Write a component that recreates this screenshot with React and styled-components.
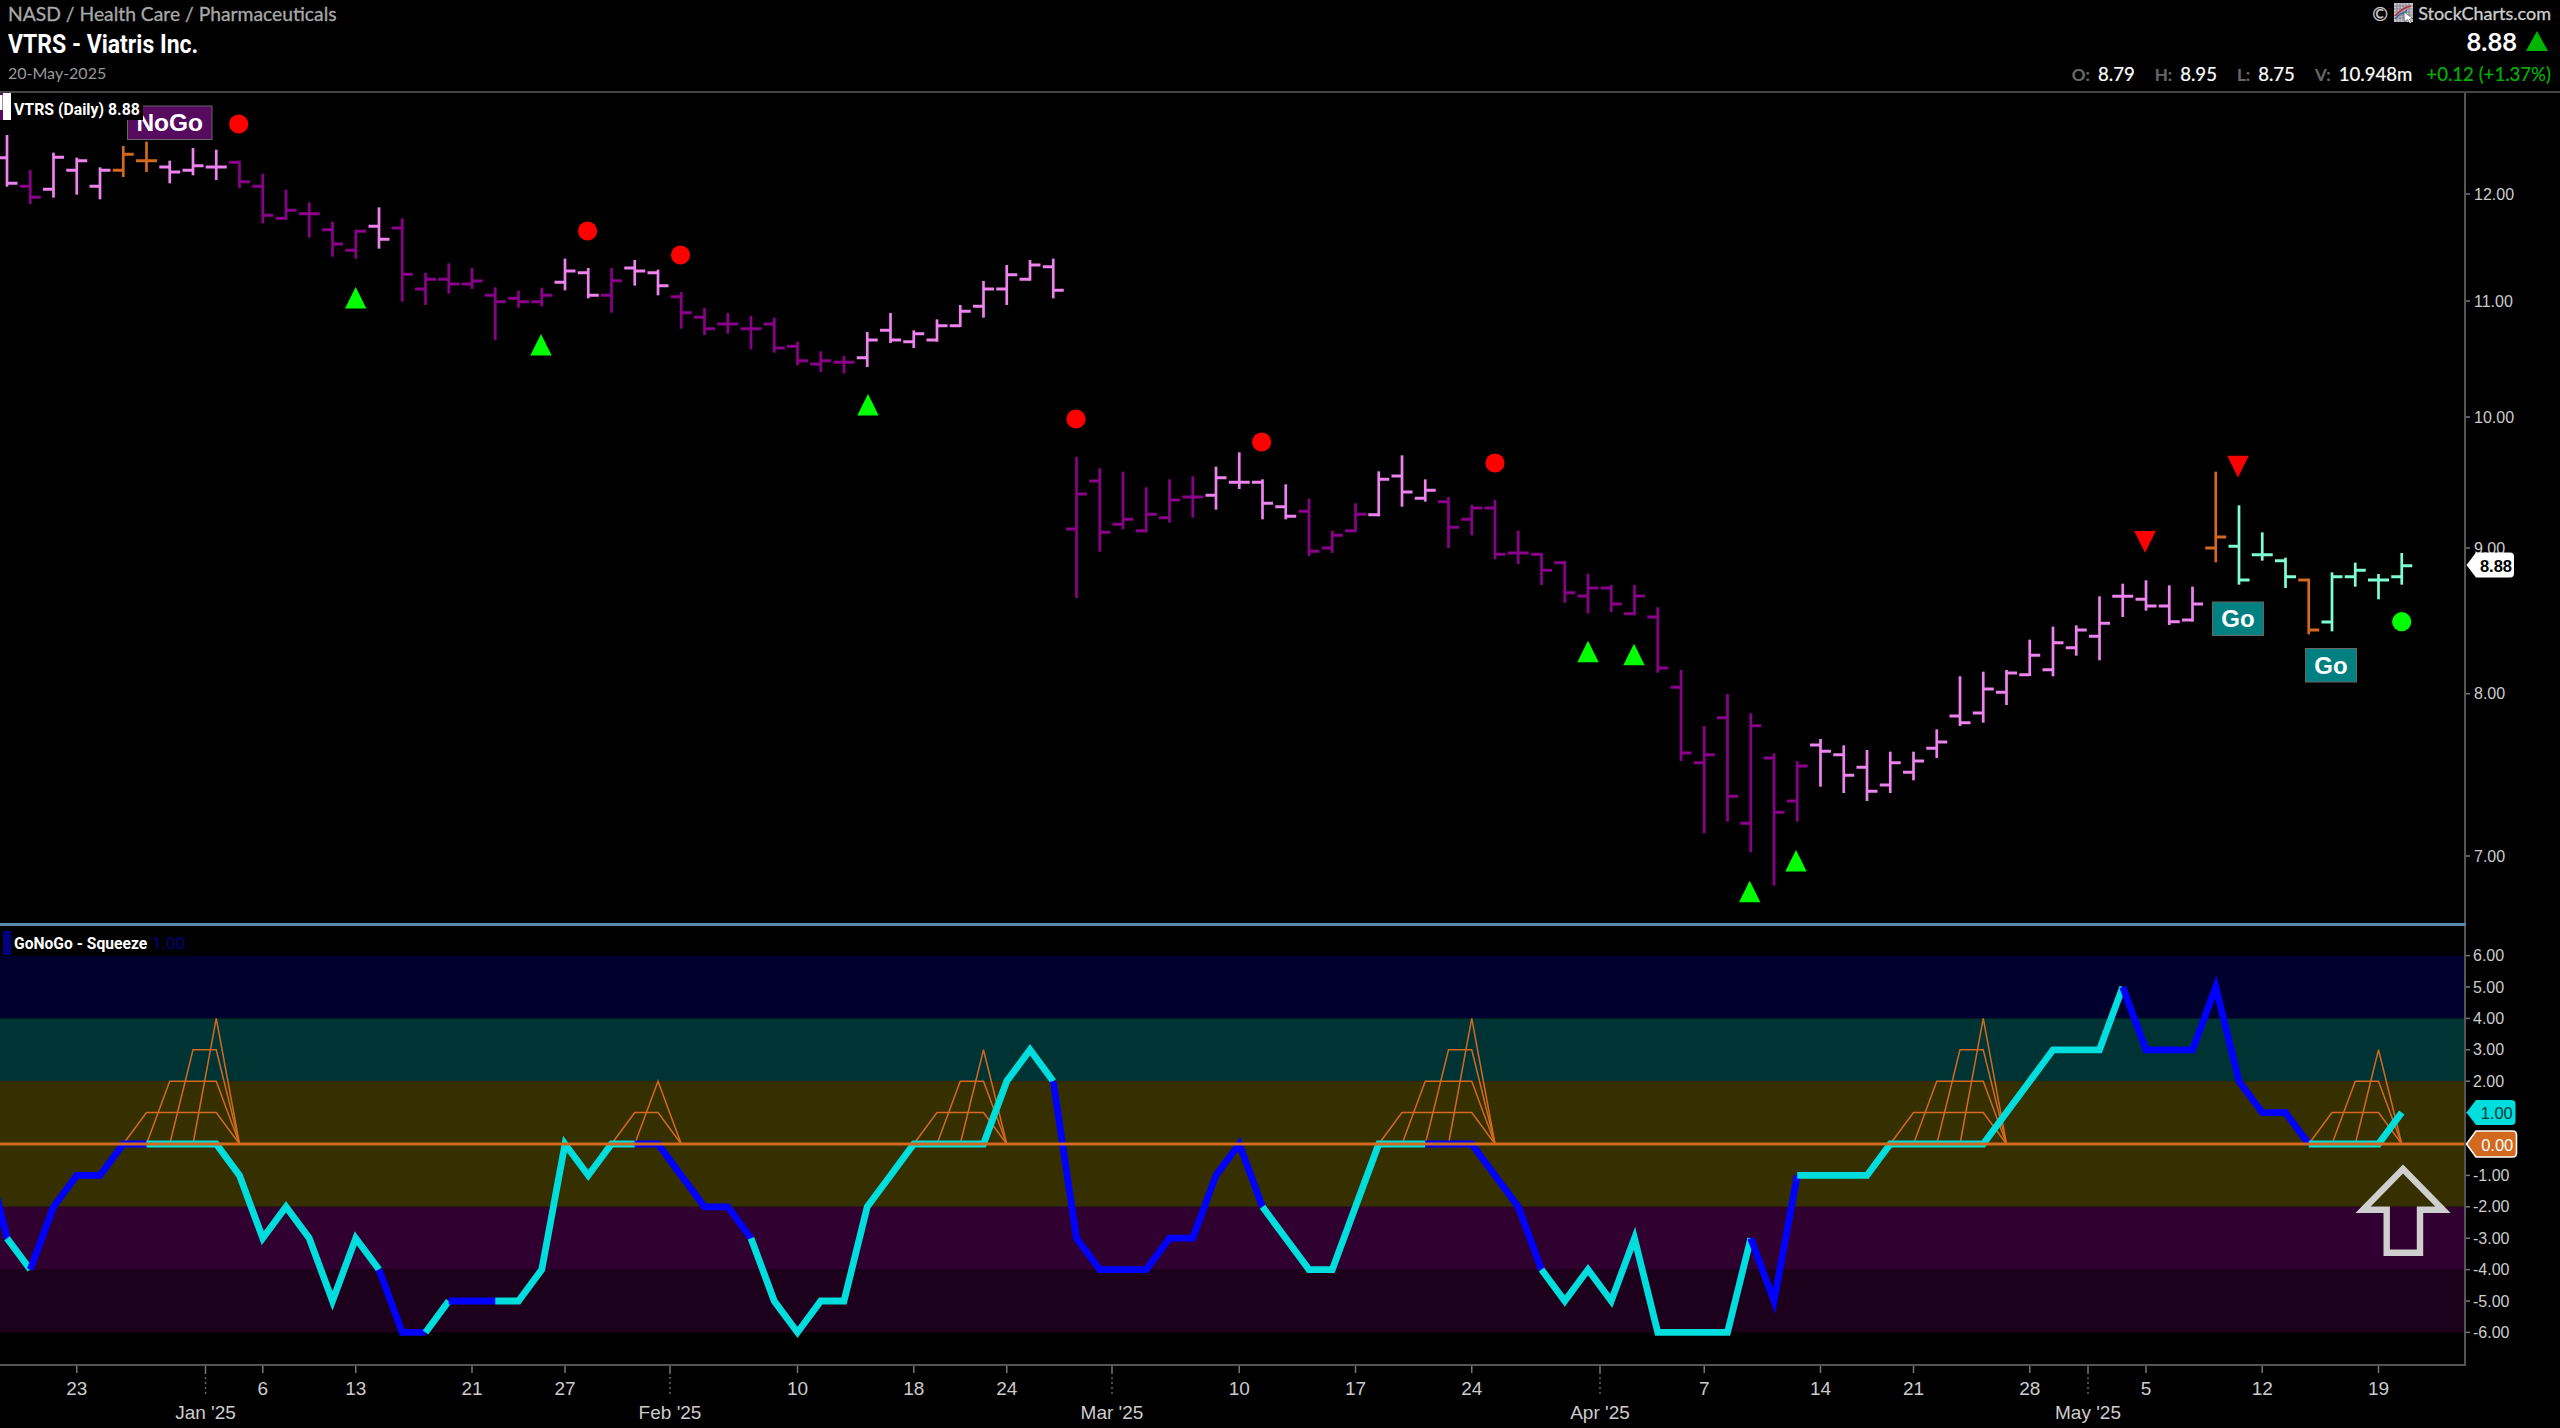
import React from "react";
import styled, { createGlobalStyle } from "styled-components";

const PINK = "#ee82ee";
const PURPLE = "#8b008b";
const ORANGE = "#d2691e";
const MINT = "#7fffd4";
const CYAN = "#00dddd";
const BLUE = "#0000ff";
const RED = "#ff0000";
const GREEN = "#00ff00";

const barX = (i) => 7 + 23.25 * i;
const oscY = (v) => 1144 - 31.4 * v;

const colors = { p: PINK, m: PURPLE, o: ORANGE, t: MINT };

// rows are [colour, high, low, open, close], read off the chart at 3x from a given top
const rows = (top, list) =>
  list.map(([c, hi, lo, open, close]) => ({
    color: colors[c],
    hi: top + hi / 3,
    lo: top + lo / 3,
    open: top + open / 3,
    close: top + close / 3
  }));

const bars = [
  ...rows(90, [
    ["p", 135, 290, 203, 280],
    ["m", 240, 342, 289, 322],
    ["p", 188, 323, 298, 202],
    ["p", 203, 314, 241, 212],
    ["p", 232, 328, 289, 241],
    ["o", 168, 261, 241, 193],
    ["o", 155, 246, 212, 212],
    ["p", 212, 280, 231, 246],
    ["p", 174, 256, 241, 227],
    ["p", 179, 270, 231, 231],
    ["m", 212, 294, 217, 275],
    ["m", 251, 400, 289, 376],
    ["m", 299, 390, 385, 361],
    ["m", 337, 443, 371, 371],
    ["m", 395, 500, 419, 462],
    ["m", 419, 506, 481, 424],
    ["p", 352, 476, 409, 448],
    ["m", 385, 635, 414, 553],
    ["m", 549, 645, 597, 568],
    ["m", 520, 611, 568, 582],
    ["m", 534, 597, 582, 573],
    ["m", 592, 750, 616, 635]
  ]),
  ...rows(200, [
    ["m", 272, 323, 295, 305],
    ["m", 263, 319, 305, 286],
    ["p", 176, 271, 247, 213],
    ["p", 204, 295, 218, 286],
    ["m", 204, 338, 286, 242],
    ["p", 180, 257, 204, 213],
    ["p", 209, 286, 218, 257],
    ["m", 276, 386, 290, 338],
    ["m", 324, 405, 352, 386],
    ["m", 339, 401, 372, 372],
    ["m", 348, 448, 386, 386],
    ["m", 353, 458, 372, 444],
    ["m", 425, 496, 439, 482],
    ["m", 454, 516, 492, 482],
    ["m", 468, 521, 487, 487],
    ["p", 396, 501, 473, 420],
    ["p", 339, 429, 391, 420],
    ["p", 391, 444, 425, 401],
    ["p", 358, 425, 420, 377],
    ["p", 315, 381, 377, 334],
    ["p", 243, 353, 319, 267],
    ["p", 195, 315, 267, 224],
    ["p", 180, 242, 238, 195],
    ["p", 176, 295, 200, 271]
  ]),
  ...rows(400, [
    ["m", 171, 594, 387, 282],
    ["m", 205, 455, 243, 397],
    ["m", 215, 388, 373, 358],
    ["m", 262, 397, 392, 343],
    ["m", 238, 368, 353, 300],
    ["m", 229, 353, 291, 291],
    ["p", 200, 329, 286, 233],
    ["p", 157, 267, 247, 247],
    ["p", 238, 358, 247, 310],
    ["p", 253, 358, 320, 349],
    ["m", 296, 468, 334, 454],
    ["m", 392, 459, 444, 406],
    ["m", 310, 397, 392, 343],
    ["p", 214, 349, 344, 238],
    ["p", 166, 320, 228, 276],
    ["p", 238, 305, 295, 271],
    ["m", 291, 444, 305, 382],
    ["m", 315, 406, 358, 324],
    ["m", 300, 478, 324, 463],
    ["m", 392, 492, 459, 459],
    ["m", 459, 555, 463, 511],
    ["m", 483, 608, 488, 578],
    ["m", 521, 641, 588, 564],
    ["m", 555, 636, 564, 612],
    ["m", 555, 646, 641, 588],
    ["m", 622, 818, 651, 804],
    ["m", 810, 1083, 862, 1059]
  ]),
  ...rows(560, [
    ["m", 498, 820, 608, 584],
    ["m", 402, 785, 473, 709],
    ["m", 460, 877, 790, 497],
    ["m", 580, 977, 594, 757],
    ["m", 604, 785, 723, 618],
    ["p", 537, 680, 555, 574],
    ["p", 556, 699, 584, 646],
    ["p", 570, 723, 622, 694],
    ["p", 575, 699, 675, 608],
    ["p", 575, 661, 637, 603],
    ["p", 508, 594, 565, 546],
    ["p", 349, 498, 468, 488],
    ["p", 335, 488, 459, 387],
    ["p", 330, 435, 397, 339],
    ["p", 239, 348, 344, 286],
    ["p", 200, 349, 329, 248],
    ["p", 196, 287, 263, 210],
    ["p", 109, 301, 229, 190],
    ["p", 71, 171, 109, 109],
    ["p", 61, 152, 118, 138],
    ["p", 76, 195, 138, 185],
    ["p", 80, 185, 180, 132]
  ]),
  ...rows(440, [
    ["o", 95, 367, 324, 291],
    ["t", 196, 434, 319, 420],
    ["t", 277, 362, 344, 344],
    ["t", 353, 444, 362, 410],
    ["o", 416, 583, 420, 570],
    ["t", 397, 574, 546, 410],
    ["t", 368, 440, 410, 391],
    ["t", 402, 478, 420, 420],
    ["t", 339, 434, 410, 377]
  ])
];

const redDots = [
  [238.7, 124],
  [587.6, 231],
  [680.5, 255],
  [1076, 419],
  [1261.6, 442],
  [1495, 463]
];
const upMarks = [
  [355.7, 287],
  [541, 334],
  [868, 394],
  [1588, 640.7],
  [1634, 643.7],
  [1749.7, 880.7],
  [1796, 850]
];
const downMarks = [
  [2145, 531],
  [2238, 455.7]
];

const priceTicks = [
  ["12.00", 194],
  ["11.00", 301],
  ["10.00", 417],
  ["9.00", 548],
  ["8.00", 693.7],
  ["7.00", 856]
];

const oscTicks = [6, 5, 4, 3, 2, 1, 0, -1, -2, -3, -4, -5, -6];

const bands = [
  { from: 6, to: 4, fill: "#00002e" },
  { from: 4, to: 2, fill: "#003333" },
  { from: 2, to: -2, fill: "#363000" },
  { from: -2, to: -4, fill: "#300030" },
  { from: -4, to: -6, fill: "#1c001c" }
];

// oscillator value per bar, first entry sits one bar left of the chart
const osc = [
  0, -3, -4, -2, -1, -1, 0, 0, 0, 0, 0, -1, -3, -2, -3, -5, -3, -4, -6, -6, -5, -5, -5, -5, -4, 0, -1,
  0, 0, 0, -1, -2, -2, -3, -5, -6, -5, -5, -2, -1, 0, 0, 0, 0, 2, 3, 2, -3, -4, -4, -4, -3, -3, -1, 0,
  -2, -3, -4, -4, -2, 0, 0, 0, 0, 0, -1, -2, -4, -5, -4, -5, -3, -6, -6, -6, -6, -3, -5, -1, -1, -1, -1,
  0, 0, 0, 0, 0, 1, 2, 3, 3, 3, 5, 3, 3, 3, 5, 2, 1, 1, 0, 0, 0, 0, 1
];

// bar ranges where the oscillator is drawn blue, the rest is cyan
const blueRuns = [
  [0, 0],
  [2, 6],
  [17, 18],
  [20, 21],
  [28, 32],
  [46, 54],
  [62, 66],
  [76, 77],
  [92, 99]
];

const isBlue = (i) => blueRuns.some(([a, b]) => i >= a && i <= b);

const oscRuns = () => {
  const runs = [];
  for (let i = 0; i <= 103; i++) {
    const color = isBlue(i) ? BLUE : CYAN;
    const from = `${barX(i - 1)},${oscY(osc[i])}`;
    const to = `${barX(i)},${oscY(osc[i + 1])}`;
    const last = runs[runs.length - 1];
    if (last && last.color === color) last.points.push(to);
    else runs.push({ color, points: [from, to] });
  }
  return runs;
};

const squeezes = [
  [5, 9],
  [26, 28],
  [39, 42],
  [59, 63],
  [81, 85],
  [99, 102]
];

const squeezeLines = () => {
  const lines = [];
  squeezes.forEach(([start, peak]) => {
    for (let k = 1; k <= peak - start; k++) {
      lines.push(
        [
          [start + k - 1, 0],
          [start + k, k],
          [peak, k],
          [peak + 1, 0]
        ]
          .map(([i, v]) => `${barX(i)},${oscY(v)}`)
          .join(" ")
      );
    }
  });
  return lines;
};

const dayLabels = [
  ["23", 3],
  ["6", 11],
  ["13", 15],
  ["21", 20],
  ["27", 24],
  ["10", 34],
  ["18", 39],
  ["24", 43],
  ["10", 53],
  ["17", 58],
  ["24", 63],
  ["7", 73],
  ["14", 78],
  ["21", 82],
  ["28", 87],
  ["5", 92],
  ["12", 97],
  ["19", 102]
];

const monthLabels = [
  ["Jan '25", 205.5],
  ["Feb '25", 670],
  ["Mar '25", 1112],
  ["Apr '25", 1600],
  ["May '25", 2088]
];

const GlobalStyle = createGlobalStyle`
  html, body {
    margin: 0;
    background: #000;
  }
`;

const Page = styled.div`
  width: 2560px;
  height: 1428px;
  display: flex;
  flex-direction: column;
  background: #000;
  overflow: hidden;
  font-family: Lato, "Liberation Sans", sans-serif;
`;

const Header = styled.header`
  height: 93px;
  box-sizing: border-box;
  border-bottom: 2px solid #444;
  display: flex;
  justify-content: space-between;
  padding: 0 9px 0 8px;
`;

const Titles = styled.div`
  display: flex;
  flex-direction: column;
`;

const Sector = styled.div`
  height: 28px;
  line-height: 28px;
  font-size: 19.3px;
  color: #a8a8a8;
  -webkit-text-stroke: 0.3px #a8a8a8;
`;

const Name = styled.div`
  height: 34px;
  line-height: 34px;
  font-family: Roboto, sans-serif;
  font-weight: 700;
  font-size: 25px;
  color: #fff;
  transform: scaleX(0.92);
  transform-origin: left center;
  white-space: nowrap;
`;

const DateLine = styled.div`
  height: 26px;
  line-height: 22px;
  font-size: 16px;
  color: #999;
`;

const Quote = styled.div`
  display: flex;
  flex-direction: column;
  align-items: flex-end;
`;

const Credit = styled.div`
  height: 27px;
  display: flex;
  align-items: center;
  font-size: 18px;
  color: #ccc;
  gap: 4px;
  -webkit-text-stroke: 0.3px #ccc;
`;

const Copy = styled.span`
  font-size: 19px;
  margin-right: 2px;
`;

const Last = styled.div`
  height: 31px;
  display: flex;
  align-items: center;
  gap: 9px;
  font-size: 25.5px;
  font-weight: 700;
  color: #fff;
  padding-right: 3px;
`;

const Ohlc = styled.div`
  height: 36px;
  display: flex;
  align-items: center;
  font-size: 18.6px;
  color: #fff;
  -webkit-text-stroke: 0.2px currentColor;
`;

const Stat = styled.span`
  margin-right: ${(p) => p.$gap || 20}px;
`;

const StatKey = styled.span`
  color: #666;
  font-weight: 700;
  font-size: 17px;
  margin-right: 8px;
`;

const Change = styled.span`
  color: #00b400;
`;

const Pane = styled.section`
  position: relative;
  height: ${(p) => p.$height}px;
`;

const Chart = styled.svg`
  display: block;
  width: 2560px;
  height: 100%;
`;

const Divider = styled.div`
  width: 2466px;
  height: 3px;
  background: #5b87a8;
`;

const Legend = styled.div`
  position: absolute;
  left: 3px;
  top: ${(p) => p.$top}px;
  height: 27px;
  display: flex;
  align-items: center;
  background: #000;
  padding-right: 3px;
`;

const Swatch = styled.span`
  width: 8px;
  height: ${(p) => p.$h}px;
  background: ${(p) => p.$color};
`;

const LegendText = styled.span`
  width: ${(p) => p.$width}px;
  margin-left: 3px;
  padding-top: ${(p) => p.$drop || 0}px;
  font-family: Roboto, sans-serif;
  font-weight: 700;
  font-size: 17px;
  color: #fff;
  white-space: nowrap;
  transform-origin: left center;
  transform: scaleX(${(p) => p.$squeeze});
`;

const LegendValue = styled.span`
  margin-left: ${(p) => p.$left}px;
  font-family: Roboto, sans-serif;
  font-size: 17px;
  color: #000080;
`;

const TickLabel = styled.text`
  font-family: "Liberation Sans", sans-serif;
  font-size: 16px;
  fill: #ccc;
  dominant-baseline: central;
`;

const DateLabel = styled.text`
  font-family: "Liberation Sans", sans-serif;
  font-size: 19px;
  fill: #ccc;
  text-anchor: middle;
`;

const SignalText = styled.text`
  font-family: "Liberation Sans", sans-serif;
  font-weight: 700;
  font-size: ${(p) => p.$size}px;
  fill: #fff;
  text-anchor: middle;
`;

const TagText = styled.text`
  font-family: "Liberation Sans", sans-serif;
  font-size: 16.5px;
  font-weight: ${(p) => (p.$bold ? 700 : 400)};
  fill: ${(p) => p.$color};
  text-anchor: middle;
  dominant-baseline: central;
`;

const Logo = () => (
  <svg width="20" height="20" viewBox="0 0 20 20">
    <rect x="0" y="0" width="19" height="19" fill="#c9c4cc" />
    {[3, 6, 9, 12, 15].map((n) => (
      <path key={n} d={`M${n} 0V19M0 ${n}H19`} stroke="#77727f" strokeWidth="0.8" />
    ))}
    <path d="M1 13 L6 8 L11 5 L17 3" stroke="#c0303c" strokeWidth="1.5" fill="none" />
    <path d="M1 16 L6 11 L10 10 L13 7" stroke="#2f6fa0" strokeWidth="1.5" fill="none" />
    <path d="M10 9 L19 15.5 L15.5 16 L17.5 20 L15.5 20 L13.5 16.5 L10.5 18.5 Z" fill="#fff" stroke="#333" strokeWidth="0.5" />
  </svg>
);

const UpArrow = () => (
  <svg width="22" height="20" viewBox="0 0 22 20">
    <polygon points="11,0 22,20 0,20" fill="#00b400" />
  </svg>
);

const Signal = ({ x, y, width, height, fill, label, size }) => (
  <g>
    <rect x={x} y={y} width={width} height={height} fill={fill} stroke="#666" strokeWidth="1" />
    <SignalText x={x + width / 2} y={y + height / 2 + size * 0.35} $size={size}>
      {label}
    </SignalText>
  </g>
);

const Tag = ({ y, right, half, fill, stroke, color, bold, value }) => (
  <g>
    <path
      d={`M2466.5 ${y} L2476 ${y - half} H${right - 4} Q${right} ${y - half} ${right} ${y - half + 4} V${y + half - 4} Q${right} ${y + half} ${right - 4} ${y + half} H2476 Z`}
      fill={fill}
      stroke={stroke || "none"}
      strokeWidth="1.6"
    />
    <TagText x={(right + 2476) / 2 + 1} y={y + 0.5} $color={color} $bold={bold}>
      {value}
    </TagText>
  </g>
);

const PriceChart = () => (
  <Chart viewBox="0 93 2560 830">
    <rect x="0" y="93" width="48" height="3" fill="#570b5e" />
    <rect x="17" y="93" width="20" height="2" fill="#fff" />
    <rect x="0" y="93" width="3" height="27" fill="#570b5e" />
    <rect x="0" y="95" width="2.5" height="15" fill="#fff" />
    {bars.map((b, i) => (
      <g key={i} stroke={b.color} fill="none">
        <path d={`M${barX(i)} ${b.hi}V${b.lo}`} strokeWidth="2.7" />
        <path d={`M${barX(i) - 10.5} ${b.open}H${barX(i)}M${barX(i)} ${b.close}H${barX(i) + 10.5}`} strokeWidth="3" />
      </g>
    ))}
    {redDots.map(([x, y]) => (
      <circle key={x} cx={x} cy={y} r="9.6" fill={RED} />
    ))}
    {upMarks.map(([x, y]) => (
      <polygon key={x} points={`${x},${y} ${x + 10.7},${y + 21.5} ${x - 10.7},${y + 21.5}`} fill={GREEN} />
    ))}
    {downMarks.map(([x, y]) => (
      <polygon key={x} points={`${x - 10.8},${y} ${x + 10.8},${y} ${x},${y + 21.7}`} fill={RED} />
    ))}
    <circle cx="2401.7" cy="621.7" r="9.6" fill={GREEN} />
    <Signal x={127.5} y={106} width={84.5} height={33.5} fill="#570b5e" label="NoGo" size={24.5} />
    <Signal x={2212.5} y={602} width={51} height={33.5} fill="#008080" label="Go" size={24} />
    <Signal x={2305.5} y={648.5} width={51} height={33.5} fill="#008080" label="Go" size={24} />
    <path d="M2465 93V923" stroke="#555" strokeWidth="2" />
    {priceTicks.map(([label, y]) => (
      <g key={label}>
        <path d={`M2466 ${y}H2470`} stroke="#777" strokeWidth="1.5" />
        <TickLabel x="2474" y={y}>
          {label}
        </TickLabel>
      </g>
    ))}
    <Tag y={565} right={2514} half={12.5} fill="#fff" color="#000" bold value="8.88" />
  </Chart>
);

const SqueezeChart = () => (
  <Chart viewBox="0 926 2560 438">
    {bands.map((b) => (
      <rect key={b.from} x="0" y={oscY(b.from)} width="2465" height={oscY(b.to) - oscY(b.from)} fill={b.fill} />
    ))}
    {squeezeLines().map((points, i) => (
      <polyline key={i} points={points} fill="none" stroke={ORANGE} strokeWidth="1.5" strokeLinejoin="miter" />
    ))}
    {oscRuns().map((run, i) => (
      <polyline
        key={i}
        points={run.points.join(" ")}
        fill="none"
        stroke={run.color}
        strokeWidth="6.8"
        strokeLinejoin="miter"
        strokeMiterlimit="12"
      />
    ))}
    <path d={`M0 ${oscY(0)}H2465`} stroke={ORANGE} strokeWidth="3" />
    <path d="M2465 926V1364" stroke="#555" strokeWidth="2" />
    {oscTicks.map((v) => (
      <g key={v}>
        <path d={`M2466 ${oscY(v)}H2470`} stroke="#777" strokeWidth="1.5" />
        {v !== 0 && v !== 1 && (
          <TickLabel x="2473" y={oscY(v)}>
            {v.toFixed(2)}
          </TickLabel>
        )}
      </g>
    ))}
    <Tag y={oscY(1)} right={2515.5} half={12.5} fill={CYAN} color="#0a3a3a" value="1.00" />
    <Tag y={oscY(0)} right={2516.5} half={13} fill={ORANGE} stroke="#fff" color="#fff" value="0.00" />
    <path
      d="M2403 1169 L2443 1209.7 H2420 V1252.7 H2386.7 V1209.7 H2363 Z"
      fill="none"
      stroke="#cfcfcf"
      strokeWidth="6.4"
    />
  </Chart>
);

const DateAxis = () => (
  <Chart viewBox="0 1364 2560 64">
    <path d="M0 1365H2466" stroke="#555" strokeWidth="2" />
    {dayLabels.map(([label, i]) => (
      <g key={i}>
        <path d={`M${barX(i)} 1366V1373`} stroke="#777" strokeWidth="1.5" />
        <DateLabel x={barX(i)} y="1395">
          {label}
        </DateLabel>
      </g>
    ))}
    {monthLabels.map(([label, x]) => (
      <g key={label}>
        <path d={`M${x} 1366V1374`} stroke="#777" strokeWidth="1.5" />
        <path d={`M${x} 1377V1395`} stroke="#666" strokeWidth="1.5" strokeDasharray="2 3" />
        <DateLabel x={x} y="1419">
          {label}
        </DateLabel>
      </g>
    ))}
  </Chart>
);

const App = () => (
  <Page>
    <GlobalStyle />
    <Header>
      <Titles>
        <Sector>NASD / Health Care / Pharmaceuticals</Sector>
        <Name>VTRS - Viatris Inc.</Name>
        <DateLine>20-May-2025</DateLine>
      </Titles>
      <Quote>
        <Credit>
          <Copy>©</Copy>
          <Logo />
          <span>StockCharts.com</span>
        </Credit>
        <Last>
          8.88
          <UpArrow />
        </Last>
        <Ohlc>
          <Stat>
            <StatKey>O:</StatKey>8.79
          </Stat>
          <Stat>
            <StatKey>H:</StatKey>8.95
          </Stat>
          <Stat>
            <StatKey>L:</StatKey>8.75
          </Stat>
          <Stat $gap={14}>
            <StatKey>V:</StatKey>10.948m
          </Stat>
          <Change>+0.12 (+1.37%)</Change>
        </Ohlc>
      </Quote>
    </Header>
    <Pane $height={830}>
      <PriceChart />
      <Legend $top={0}>
        <Swatch $color="#fff" $h={27} />
        <LegendText $width={126} $squeeze={0.93} $drop={4}>
          VTRS (Daily) 8.88
        </LegendText>
      </Legend>
    </Pane>
    <Divider />
    <Pane $height={438}>
      <SqueezeChart />
      <Legend $top={3}>
        <Swatch $color="#000080" $h={24} />
        <LegendText $width={133} $squeeze={0.92}>
          GoNoGo - Squeeze
        </LegendText>
        <LegendValue $left={5}>1.00</LegendValue>
      </Legend>
    </Pane>
    <Pane $height={64}>
      <DateAxis />
    </Pane>
  </Page>
);

export default App;
